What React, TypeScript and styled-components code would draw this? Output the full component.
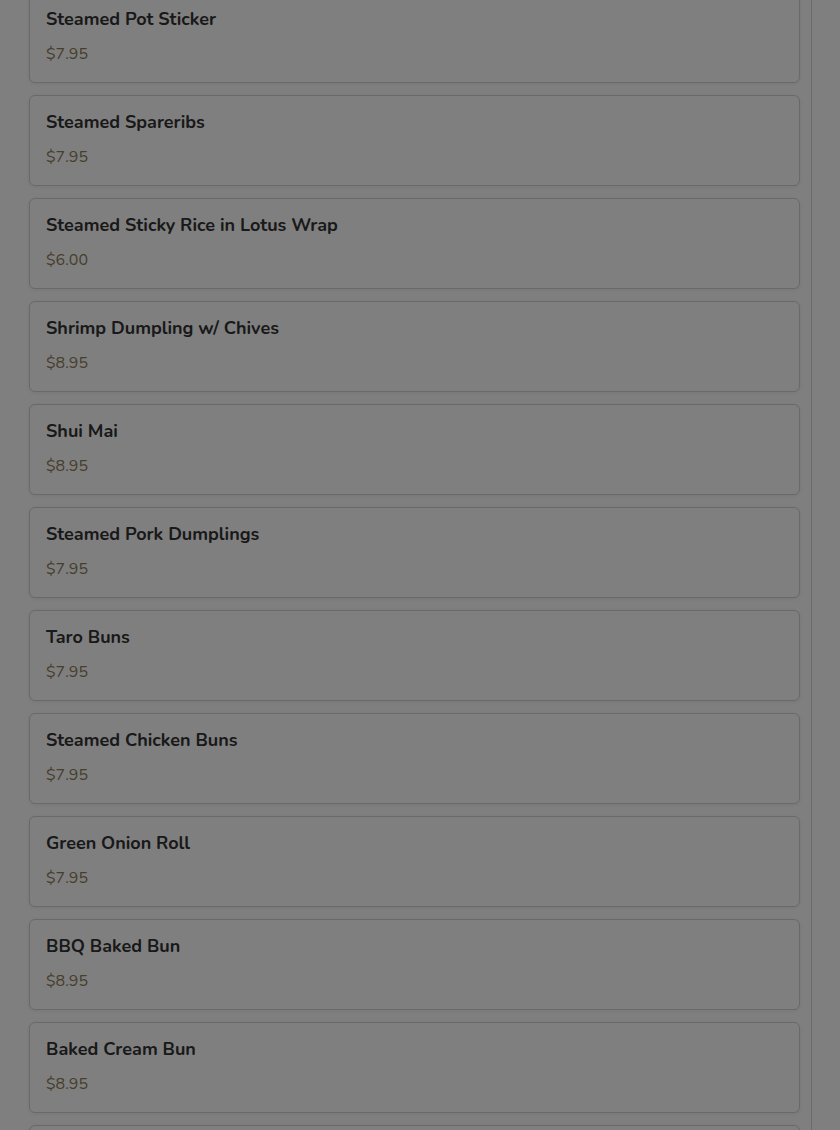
import React from "react";
import styled, { createGlobalStyle } from "styled-components";

const Global = createGlobalStyle`
  html, body { margin: 0; padding: 0; background: #ffffff; }
  body { font-family: "Nunito", Lato, "Open Sans", sans-serif; overflow: hidden; }
`;

const Page = styled.div`
  width: 811px;
  height: 1130px;
  border-right: 1px solid #d6d6d6;
  overflow: hidden;
`;

const List = styled.div`
  display: flex;
  flex-direction: column;
  gap: 12px;
  margin-top: -8px;
  padding: 0 11px 0 29px;
`;

const Card = styled.div`
  box-sizing: border-box;
  height: 91px;
  border: 1px solid #d2d2d2;
  border-radius: 6px;
  box-shadow: 0 1px 4px rgba(0, 0, 0, 0.08);
  padding: 13px 16px 0 16px;
  background: #ffffff;
  display: flex;
  flex-direction: column;
`;

const Title = styled.div`
  font-size: 18px;
  font-weight: 700;
  line-height: 26px;
  color: #333333;
`;

const Price = styled.div`
  margin-top: 10px;
  font-size: 16px;
  line-height: 24px;
  color: #8e7c58;
`;

const Overlay = styled.div`
  position: fixed;
  inset: 0;
  background: rgba(0, 0, 0, 0.5);
`;

const items = [
  ["Steamed Pot Sticker", "$7.95"],
  ["Steamed Spareribs", "$7.95"],
  ["Steamed Sticky Rice in Lotus Wrap", "$6.00"],
  ["Shrimp Dumpling w/ Chives", "$8.95"],
  ["Shui Mai", "$8.95"],
  ["Steamed Pork Dumplings", "$7.95"],
  ["Taro Buns", "$7.95"],
  ["Steamed Chicken Buns", "$7.95"],
  ["Green Onion Roll", "$7.95"],
  ["BBQ Baked Bun", "$8.95"],
  ["Baked Cream Bun", "$8.95"],
];

export default function App() {
  return (
    <>
      <Global />
      <Page>
        <List>
          {items.map(([name, price]) => (
            <Card key={name}>
              <Title>{name}</Title>
              <Price>{price}</Price>
            </Card>
          ))}
          <Card />
        </List>
      </Page>
      <Overlay />
    </>
  );
}
